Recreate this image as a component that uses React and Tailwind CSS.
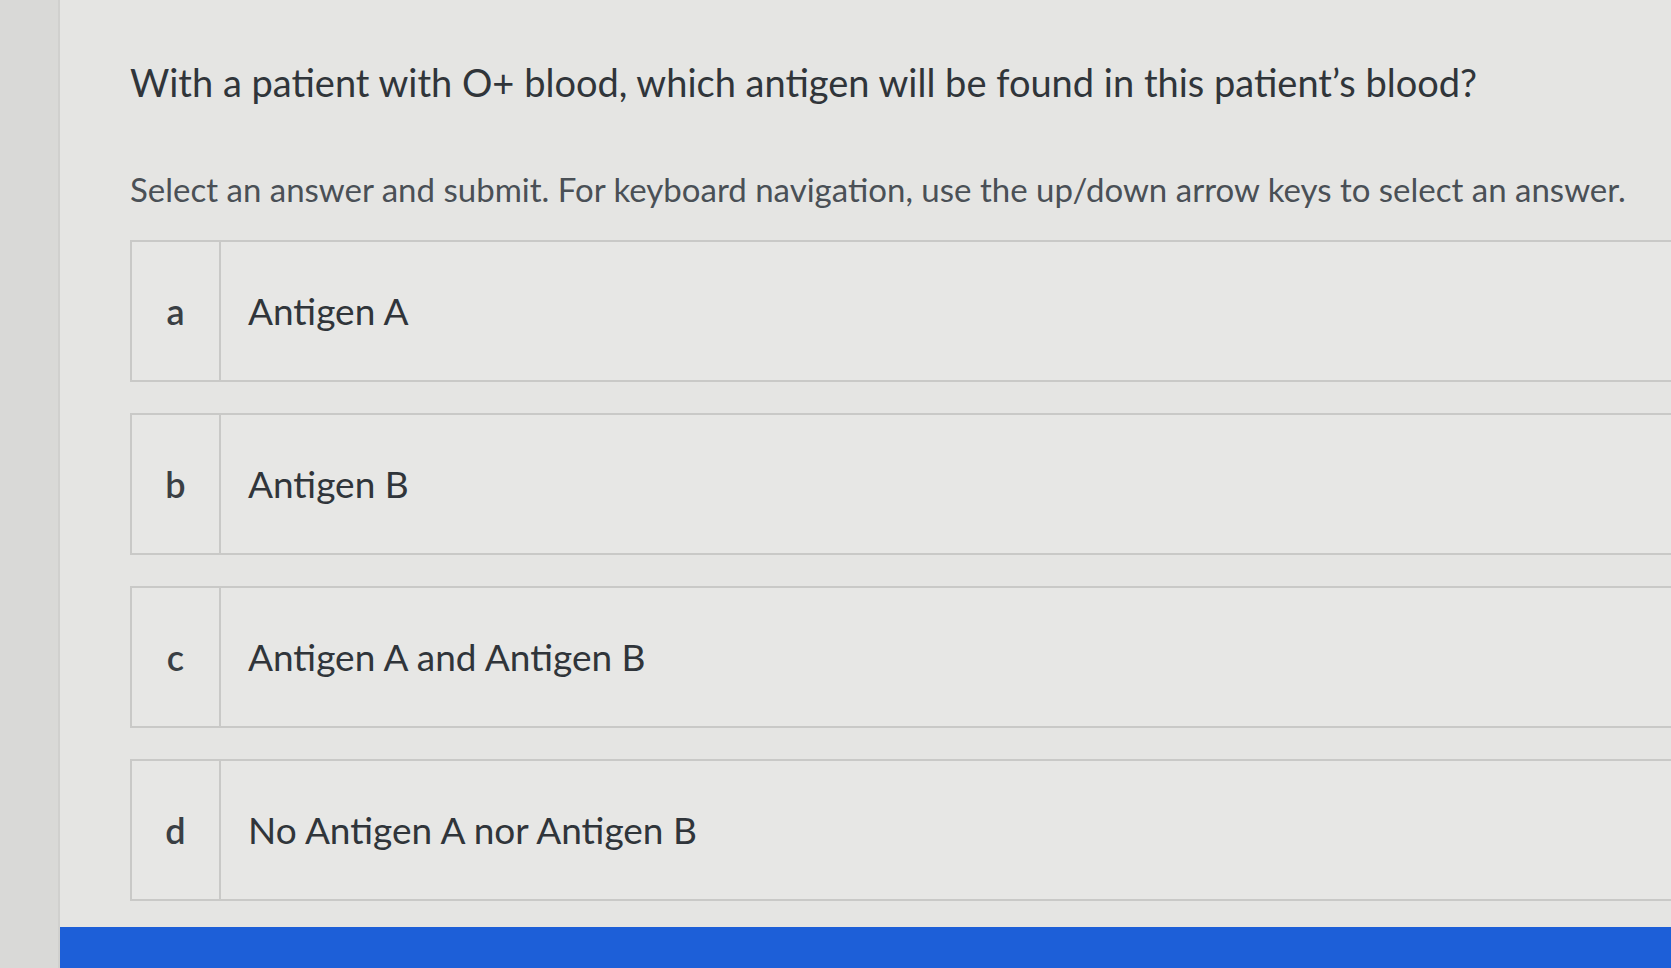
const options = [
  { key: "a", text: "Antigen A" },
  { key: "b", text: "Antigen B" },
  { key: "c", text: "Antigen A and Antigen B" },
  { key: "d", text: "No Antigen A nor Antigen B" },
];

export default function App() {
  return (
    <div
      className="flex h-[968px] w-[1671px] overflow-hidden bg-[#e5e5e3]"
      style={{ fontFamily: "Lato, 'Open Sans', sans-serif" }}
    >
      <div className="w-[60px] shrink-0 border-r-2 border-[#d0d0ce] bg-[#d9d9d7]" />
      <div className="flex flex-1 flex-col">
        <div className="flex-1 overflow-hidden pl-[70px] pt-[58px]">
          <h1 className="text-[38px] leading-[48px] text-[#30353a]">
            With a patient with O+ blood, which antigen will be found in this patient’s blood?
          </h1>
          <p className="mt-[63px] text-[33px] leading-[40px] text-[#4a5056]">
            Select an answer and submit. For keyboard navigation, use the up/down arrow keys to select an answer.
          </p>
          <div className="mt-[31px] flex flex-col gap-[31px]">
            {options.map((o) => (
              <div
                key={o.key}
                className="flex h-[142px] border-2 border-r-0 border-[#c9c9c7] bg-[#e7e7e5]"
              >
                <div className="flex w-[89px] shrink-0 items-center justify-center border-r-2 border-[#c9c9c7] text-[36px] font-semibold text-[#3a3f44]">
                  {o.key}
                </div>
                <div className="flex items-center pl-[27px] text-[37px] text-[#30353a]">
                  {o.text}
                </div>
              </div>
            ))}
          </div>
        </div>
        <div className="h-[41px] bg-[#1d5fd8]" />
      </div>
    </div>
  );
}
